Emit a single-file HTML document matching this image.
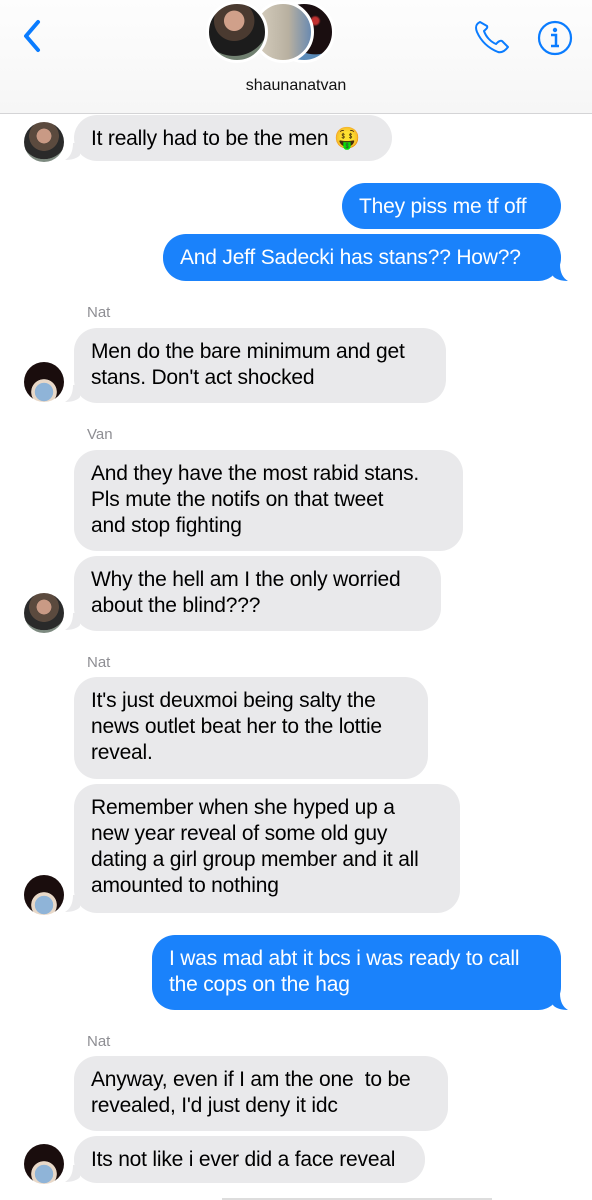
<!DOCTYPE html>
<html><head><meta charset="utf-8"><style>
body{margin:0;width:592px;height:1200px;background:#fff;position:relative;overflow:hidden;font-family:"Liberation Sans",Arial,sans-serif;}
.hdr{position:absolute;left:0;top:0;width:592px;height:113px;background:linear-gradient(#fdfdfd,#f6f6f6);border-bottom:1px solid #d4d4d6;}
.b{position:absolute;border-radius:23px;font-size:21px;line-height:26px;padding:11px 18px 10px 17px;box-sizing:border-box;letter-spacing:-0.2px;white-space:nowrap;}
.g{background:#e9e9eb;color:#000;left:74px;}
.bl{background:#1a82fb;color:#fff;right:31px;}
.n{position:absolute;left:87px;font-size:15px;color:#8e8e93;}
.av{position:absolute;left:24px;width:40px;height:40px;border-radius:50%;}
.a1{background:radial-gradient(circle at 50% 35%,#c99a85 0 22%,#5b4a3e 23% 45%,#2a2a2a 46% 70%,#7d8a80 71%);}
.a2{background:radial-gradient(circle at 50% 75%,#8fb4d8 0 25%,#e8d8c8 26% 35%,#1a0d0d 36%);}
.tl{position:absolute;width:20px;height:18px;overflow:visible;}
</style></head><body>
<div class="hdr"></div>
<svg style="position:absolute;left:20px;top:18px" width="26" height="36"><path d="M18 4 L6 18 L18 32" stroke="#0a7cff" stroke-width="4" fill="none" stroke-linecap="round" stroke-linejoin="round"/></svg>
<svg style="position:absolute;left:472px;top:18px" width="42" height="38"><path d="M8 4 C4 6 3 9 5 14 C9 23 16 30 26 34 C30 35 33 33 36 29 L30 23 C28 22 26 24 24 26 C19 24 14 19 12 13 C14 11 16 10 15 8 Z" stroke="#0a7cff" stroke-width="2" fill="none" stroke-linejoin="round"/></svg>
<svg style="position:absolute;left:535px;top:18px" width="40" height="40"><circle cx="20" cy="20" r="16" stroke="#0a7cff" stroke-width="2.2" fill="none"/><circle cx="20" cy="12" r="2.2" fill="#0a7cff"/><path d="M16 17h5v11M16 28h8" stroke="#0a7cff" stroke-width="2.5" fill="none"/></svg>
<div style="position:absolute;left:273px;top:1px;border-radius:50%;background:radial-gradient(circle at 70% 30%,#c03030 0 6%,#1a0e10 10% 60%,#5a8ab8 61%);border:3px solid #fff;width:56px;height:56px"></div>
<div style="position:absolute;left:252px;top:1px;width:56px;height:56px;border-radius:50%;background:linear-gradient(90deg,#d8d0c0,#b8b0a0 60%,#6a8ab0);border:3px solid #fff"></div>
<div style="position:absolute;left:206px;top:1px;width:56px;height:56px;border-radius:50%;background:radial-gradient(circle at 45% 30%,#d0a08a 0 20%,#4a3a30 21% 40%,#1c1c1c 41% 70%,#708070 71%);border:3px solid #fff"></div>
<div style="position:absolute;left:0;width:592px;top:77px;text-align:center;font-size:16px;color:#111">shaunanatvan</div>

<svg class="tl" style="left:64px;top:143px"><path d="M16 0 L16 12 C14 15 8 17 1 17 C6 14 9 9 9 0 Z" fill="#e9e9eb"/></svg>
<div class="av a1" style="top:122px"></div>
<div class="b g" style="top:115px;width:318px;height:46px">It really had to be the men 🤑</div>
<div class="b bl" style="top:183px;width:219px;height:46px">They piss me tf off</div>
<svg class="tl" style="left:549px;top:264px"><path d="M4 0 L4 12 C6 15 12 17 19 17 C14 14 11 9 11 0 Z" fill="#1a82fb"/></svg>
<div class="b bl" style="top:234px;width:398px;height:47px">And Jeff Sadecki has stans?? How??</div>
<div class="n" style="top:304px">Nat</div>
<svg class="tl" style="left:64px;top:385px"><path d="M16 0 L16 12 C14 15 8 17 1 17 C6 14 9 9 9 0 Z" fill="#e9e9eb"/></svg>
<div class="b g" style="top:328px;width:372px;height:75px">Men do the bare minimum and get<br>stans. Don't act shocked</div>
<div class="av a2" style="top:362px"></div>
<div class="n" style="top:426px">Van</div>
<div class="b g" style="top:450px;width:389px;height:101px">And they have the most rabid stans.<br>Pls mute the notifs on that tweet<br>and stop fighting</div>
<svg class="tl" style="left:64px;top:613px"><path d="M16 0 L16 12 C14 15 8 17 1 17 C6 14 9 9 9 0 Z" fill="#e9e9eb"/></svg>
<div class="b g" style="top:556px;width:367px;height:75px">Why the hell am I the only worried<br>about the blind???</div>
<div class="av a1" style="top:593px"></div>
<div class="n" style="top:654px">Nat</div>
<div class="b g" style="top:677px;width:354px;height:102px">It's just deuxmoi being salty the<br>news outlet beat her to the lottie<br>reveal.</div>
<svg class="tl" style="left:64px;top:895px"><path d="M16 0 L16 12 C14 15 8 17 1 17 C6 14 9 9 9 0 Z" fill="#e9e9eb"/></svg>
<div class="b g" style="top:784px;width:386px;height:129px">Remember when she hyped up a<br>new year reveal of some old guy<br>dating a girl group member and it all<br>amounted to nothing</div>
<div class="av a2" style="top:875px"></div>
<svg class="tl" style="left:549px;top:993px"><path d="M4 0 L4 12 C6 15 12 17 19 17 C14 14 11 9 11 0 Z" fill="#1a82fb"/></svg>
<div class="b bl" style="top:935px;width:409px;height:75px">I was mad abt it bcs i was ready to call<br>the cops on the hag</div>
<div class="n" style="top:1033px">Nat</div>
<div class="b g" style="top:1056px;width:374px;height:75px">Anyway, even if I am the one&nbsp; to be<br>revealed, I'd just deny it idc</div>
<svg class="tl" style="left:64px;top:1165px"><path d="M16 0 L16 12 C14 15 8 17 1 17 C6 14 9 9 9 0 Z" fill="#e9e9eb"/></svg>
<div class="b g" style="top:1136px;width:351px;height:47px">Its not like i ever did a face reveal</div>
<div class="av a2" style="top:1144px"></div>
<div style="position:absolute;left:222px;top:1198px;width:270px;height:2px;background:#ddd"></div>
</body></html>
